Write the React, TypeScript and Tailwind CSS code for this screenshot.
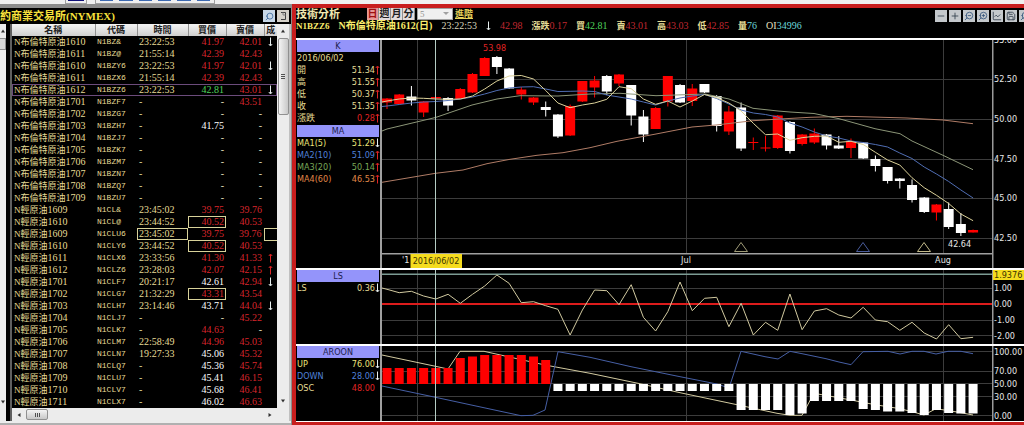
import React from "react";
import { Minus, Plus, ZoomOut, ZoomIn, Search, Save, ChartLine } from "lucide-react";

type Tone = "r" | "g" | "w";
interface IQuote {
  name: string;
  month: string;
  code: string;
  time: string;
  bid: string;
  ask: string;
  bidTone?: Tone;
  dir?: "up" | "down";
  boxBid?: boolean;
  boxTime?: boolean;
  selected?: boolean;
}

const BRENT = "N布倫特原油";
const CRUDE = "N輕原油";

const quotes: IQuote[] = [
  { name: BRENT, month: "1610", code: "N1BZ&", time: "23:22:53", bid: "41.97", ask: "42.01", dir: "down" },
  { name: BRENT, month: "1611", code: "N1BZ@", time: "21:55:14", bid: "42.39", ask: "42.43" },
  { name: BRENT, month: "1610", code: "N1BZY6", time: "23:22:53", bid: "41.97", ask: "42.01", dir: "down" },
  { name: BRENT, month: "1611", code: "N1BZX6", time: "21:55:14", bid: "42.39", ask: "42.43" },
  { name: BRENT, month: "1612", code: "N1BZZ6", time: "23:22:53", bid: "42.81", ask: "43.01", bidTone: "g", dir: "down", selected: true },
  { name: BRENT, month: "1701", code: "N1BZF7", time: "-", bid: "-", ask: "43.51" },
  { name: BRENT, month: "1702", code: "N1BZG7", time: "-", bid: "-", ask: "-" },
  { name: BRENT, month: "1703", code: "N1BZH7", time: "-", bid: "41.75", ask: "-", bidTone: "w" },
  { name: BRENT, month: "1704", code: "N1BZJ7", time: "-", bid: "-", ask: "-" },
  { name: BRENT, month: "1705", code: "N1BZK7", time: "-", bid: "-", ask: "-" },
  { name: BRENT, month: "1706", code: "N1BZM7", time: "-", bid: "-", ask: "-" },
  { name: BRENT, month: "1707", code: "N1BZN7", time: "-", bid: "-", ask: "-" },
  { name: BRENT, month: "1708", code: "N1BZQ7", time: "-", bid: "-", ask: "-" },
  { name: BRENT, month: "1709", code: "N1BZU7", time: "-", bid: "-", ask: "-" },
  { name: CRUDE, month: "1609", code: "N1CL&", time: "23:45:02", bid: "39.75", ask: "39.76" },
  { name: CRUDE, month: "1610", code: "N1CL@", time: "23:44:52", bid: "40.52", ask: "40.53", boxBid: true },
  { name: CRUDE, month: "1609", code: "N1CLU6", time: "23:45:02", bid: "39.75", ask: "39.76", boxTime: true },
  { name: CRUDE, month: "1610", code: "N1CLY6", time: "23:44:52", bid: "40.52", ask: "40.53", boxBid: true },
  { name: CRUDE, month: "1611", code: "N1CLX6", time: "23:33:56", bid: "41.30", ask: "41.33", dir: "up" },
  { name: CRUDE, month: "1612", code: "N1CLZ6", time: "23:28:03", bid: "42.07", ask: "42.15", dir: "up" },
  { name: CRUDE, month: "1701", code: "N1CLF7", time: "20:21:17", bid: "42.61", ask: "42.94", bidTone: "w", dir: "down" },
  { name: CRUDE, month: "1702", code: "N1CLG7", time: "21:32:29", bid: "43.31", ask: "43.54", boxBid: true },
  { name: CRUDE, month: "1703", code: "N1CLH7", time: "23:14:46", bid: "43.71", ask: "44.04", bidTone: "w", dir: "down" },
  { name: CRUDE, month: "1704", code: "N1CLJ7", time: "-", bid: "-", ask: "45.22" },
  { name: CRUDE, month: "1705", code: "N1CLK7", time: "-", bid: "44.63", ask: "-" },
  { name: CRUDE, month: "1706", code: "N1CLM7", time: "22:58:49", bid: "44.96", ask: "45.03" },
  { name: CRUDE, month: "1707", code: "N1CLN7", time: "19:27:33", bid: "45.06", ask: "45.32", bidTone: "w" },
  { name: CRUDE, month: "1708", code: "N1CLQ7", time: "-", bid: "45.36", ask: "45.74", bidTone: "w" },
  { name: CRUDE, month: "1709", code: "N1CLU7", time: "-", bid: "45.41", ask: "46.15", bidTone: "w" },
  { name: CRUDE, month: "1710", code: "N1CLV7", time: "-", bid: "45.68", ask: "46.41", bidTone: "w" },
  { name: CRUDE, month: "1711", code: "N1CLX7", time: "-", bid: "46.02", ask: "46.63", bidTone: "w" },
];

const toneClass: Record<Tone, string> = {
  r: "text-[#d8262c]",
  g: "text-[#4fd35c]",
  w: "text-white",
};

// x of the n-th trading day
const dayX = (i: number) => 387 + i * 12.21;

// up day?, body top, body bottom, high, low
const candles: [number, number, number, number, number][] = [
  [1, 98.5, 102.5, 98, 109], [1, 94.5, 104, 94, 104], [0, 96.5, 100.5, 86, 105.5], [1, 101.5, 112.5, 101, 117],
  [1, 97, 98.5, 97, 99], [0, 98, 105.5, 97, 111], [1, 89, 99, 88, 99], [1, 74, 92.5, 73, 93],
  [1, 58, 76, 57, 76], [0, 57, 67, 56, 74], [0, 68.5, 88.5, 68, 89], [1, 89.5, 94.5, 87, 99.5],
  [1, 97.5, 102.5, 97, 105], [0, 107, 110, 101.5, 116.5], [0, 114.5, 136.5, 114, 138], [1, 106, 135.5, 104.5, 136],
  [1, 81, 101.5, 81, 102], [1, 80.5, 87.5, 76, 97.5], [0, 76, 91.5, 75, 95], [1, 74.5, 83.5, 74, 86],
  [0, 85, 115.5, 85, 125.5], [0, 116.5, 134.5, 110, 142], [1, 108, 129, 107, 129], [1, 76, 101.5, 76, 106.5],
  [0, 85, 102.5, 84, 103], [1, 88.5, 101, 84, 106], [0, 84, 92.5, 84, 93], [0, 96, 126, 95, 131.5],
  [1, 111.5, 131.5, 106, 135], [0, 107.5, 148.5, 102.5, 151], [1, 142, 143, 137.5, 150], [1, 147.5, 148.5, 136, 151.5],
  [1, 115.5, 148, 115, 149], [0, 122, 151, 121, 153.5], [1, 134.5, 144, 134, 145.5], [1, 133.5, 142.5, 128.5, 144],
  [0, 134.5, 145.5, 134, 149.5], [0, 145.5, 148.5, 136, 149], [1, 141, 148, 138.5, 158], [0, 142.5, 158.5, 142, 159],
  [0, 159, 166, 155.5, 171.5], [0, 167, 181, 167, 183.5], [0, 178.5, 181, 178, 188.5], [0, 185, 200, 179.5, 202.5],
  [0, 197.5, 212, 197, 213], [1, 204.5, 212.5, 204, 220.5], [0, 209, 227, 202.5, 229], [0, 224, 233, 213, 236],
  [1, 230, 232.5, 229.5, 232.5],
];

const ma5 = [
  101, 99, 98, 98.3, 99, 99.3, 99, 96, 89, 81, 76, 75.5, 79, 90.5, 103, 107.7, 105, 103, 99.3, 86.7, 88.7, 99, 104.3, 101, 107,
  101, 94.5, 97.7, 103, 111, 123.3, 134.7, 134, 140.3, 137.7, 136.3, 136, 142.3, 141.3, 144.5, 152.3, 160, 165, 177.7, 187.7,
  195.3, 203.5, 214, 220.7,
];
const ma10 = [
  106, 104.5, 103, 102, 101.5, 100.5, 99, 97, 94, 90.5, 88, 87, 86.7, 89, 91.5, 91.3, 91, 91.5, 95, 97, 99, 102, 105, 101, 98,
  96, 94.5, 98.5, 104, 110, 113, 114.5, 117, 123, 127, 132, 136, 138, 141, 142.5, 144.5, 147, 153, 158.5, 167, 174, 181.5, 190,
  198,
];
const ls = [
  289.3, 292.7, 291.3, 296, 299, 294.3, 303.3, 294.3, 286, 275, 283.3, 302.7, 301.7, 305.7, 309.3, 335, 310, 290, 290.7, 304.7,
  284.7, 317.3, 331, 311.7, 282, 310.7, 298.3, 297.3, 326.7, 303.3, 335, 322.3, 330.3, 294, 329.7, 311, 308.7, 315, 318, 307.3,
  320, 321.7, 330.3, 322.3, 333, 339, 324.7, 338.7, 337.3,
];
// far end of every oscillator bar, the base line is at 384
const osc = [
  368, 368, 368, 368, 368, 368, 358, 356.5, 355, 355, 355, 355, 356.5, 360, 391, 391, 391, 391, 391, 391, 391, 391, 391, 391,
  391, 391, 391, 391, 391, 410, 410, 410, 410, 415, 413.5, 401, 401, 401, 401, 409, 410, 411.5, 411.5, 413, 415, 410, 413,
  413.5, 413.5,
];

const toPoints = (list: number[], start: number) =>
  `382,${start} ` + list.map((y, i) => `${dayX(i).toFixed(1)},${y}`).join(" ");

const ma20 =
  "382,131 387,129 435.5,117.5 472,105 497,99 520,95.7 558,96 590,94 620,93.3 656,95.7 705,94 729,99 753,108.3 778,111 790,112 814,113.5 839,118.7 875,128.7 900,133.7 912,141 943,155.3 973,169.7";
const ma60 =
  "382,182.3 435.5,173.3 463,170 487,163.7 510,159.3 537,155.3 563,152.7 590,147.7 617,141.3 656,134 692,127 716,125 753,120.7 780,119 810,117.3 847,116.3 907,118 943,120 973,123.7";
const aroonUp =
  "382,355 435.5,366.3 448,369 460,351.3 484,351.3 545,365 590,373.3 638,383.3 680,392.7 729,403 777,413.3 790,415.3 802,415.3 814,393.3 833,396.7 851,400 875,404.7 900,408.7 912,411.7 924,415 936,408.7 957,412 973,415";
const aroonDown =
  "382,386 435.5,397.3 521,415.7 533,415.3 545,410 558,351.7 590,357.3 631,366.7 680,376.7 717,384 726,387 730,385 741,351.3 765,356.7 778,359 790,351.3 802,353.7 826,358.7 839,362 851,364.7 863,351.7 888,351.3 900,354 912,351.3 924,351.3 936,354 948,351.3 961,351.3 973,353.7";

const GRID = "#3c3c3c";
const labelProps = { fill: "#e6e6e6", fontSize: 9, fontFamily: "'DejaVu Sans Condensed','DejaVu Sans',sans-serif" };

const Grid = ({ rows, top, bottom }: { rows: number[]; top: number; bottom: number }) => (
  <g stroke={GRID} shapeRendering="crispEdges">
    {rows.map((y) => (
      <line key={y} x1="382" x2="992" y1={y} y2={y} />
    ))}
    {[417.5, 686.5, 943.5].map((x) => (
      <line key={x} x1={x} x2={x} y1={top} y2={bottom} />
    ))}
  </g>
);

const AxisLine = ({ top, bottom }: { top: number; bottom: number }) => (
  <rect x="992" y={top} width="1.5" height={bottom - top} fill="#9a9a9a" />
);

const Cursor = ({ top, bottom }: { top: number; bottom: number }) => (
  <rect x="435" y={top} width="1" height={bottom - top} fill="#b4ccc4" />
);

const PriceChart = () => (
  <svg viewBox="382 40 642 228" className="block h-auto w-full" role="img" aria-label="K">
    <Grid rows={[79.5, 119.5, 159.5, 198.5, 238.5]} top={40} bottom={253} />
    {candles.map(([up, top, bottom, high, low], i) => (
      <g key={i} fill={up ? "#ff0000" : "#ffffff"}>
        <rect x={dayX(i) - 0.5} y={high} width="1" height={low - high} />
        <rect x={dayX(i) - 5} y={top} width="10" height={bottom - top} />
      </g>
    ))}
    <g fill="none" strokeWidth="1">
      <polyline points={ma60} stroke="#b07c66" />
      <polyline points={ma20} stroke="#8c9678" />
      <polyline points={toPoints(ma10, 106.5)} stroke="#506eb4" />
      <polyline points={toPoints(ma5, 102)} stroke="#dcd29a" />
      <path d="M734.5 251.5h13l-6.5-9z" stroke="#a09c78" />
      <path d="M856.5 251.5h13l-6.5-9z" stroke="#4a5c9c" />
      <path d="M917.5 251.5h13l-6.5-9z" stroke="#c4bc8c" />
    </g>
    <text {...labelProps} x="483" y="51" fill="#e02424">53.98</text>
    <text {...labelProps} x="948" y="247">42.64</text>
    <rect x="382" y="253" width="611" height="1.5" fill="#a0a0a0" />
    <Cursor top={40} bottom={254} />
    <text {...labelProps} x="402" y="263">'1</text>
    <rect x="410.5" y="254" width="51.5" height="14" fill="#f5dc1e" />
    <text {...labelProps} x="436" y="264" textAnchor="middle" fill="#3c3400">2016/06/02</text>
    <text {...labelProps} x="686" y="263" textAnchor="middle">Jul</text>
    <text {...labelProps} x="943" y="263" textAnchor="middle">Aug</text>
    <AxisLine top={40} bottom={268} />
    <text {...labelProps} x="994" y="43">55.00</text>
    <text {...labelProps} x="994" y="82">52.50</text>
    <text {...labelProps} x="994" y="122">50.00</text>
    <text {...labelProps} x="994" y="162">47.50</text>
    <text {...labelProps} x="994" y="201">45.00</text>
    <text {...labelProps} x="994" y="241">42.50</text>
  </svg>
);

const LsChart = () => (
  <svg viewBox="382 270 642 74" className="block h-auto w-full" role="img" aria-label="LS">
    <Grid rows={[288.5, 320.5, 335.5]} top={270} bottom={344} />
    <rect x="382" y="273.5" width="611" height="1.5" fill="#7c9c94" />
    <rect x="382" y="303" width="611" height="2" fill="#dc1c1c" />
    <polyline points={toPoints(ls, 288)} fill="none" stroke="#d2caa0" />
    <Cursor top={270} bottom={344} />
    <AxisLine top={270} bottom={344} />
    <rect x="993" y="270" width="31" height="10" fill="#f5dc1e" />
    <text {...labelProps} x="994" y="278" fill="#3c3400">1.9376</text>
    <text {...labelProps} x="994" y="291">1.00</text>
    <text {...labelProps} x="994" y="307">0.00</text>
    <text {...labelProps} x="994" y="323">-1.00</text>
    <text {...labelProps} x="994" y="339">-2.00</text>
  </svg>
);

const AroonChart = () => (
  <svg viewBox="382 346 642 75" className="block h-auto w-full" role="img" aria-label="AROON">
    <Grid rows={[351.5, 371.5, 383.5, 396.5, 415.5]} top={346} bottom={421} />
    <polyline points={aroonUp} fill="none" stroke="#d2caa0" />
    <polyline points={aroonDown} fill="none" stroke="#465fa5" />
    {osc.map((y, i) => (
      <rect
        key={i}
        x={dayX(i) - 4.5}
        y={Math.min(y, 384)}
        width="9"
        height={Math.abs(y - 384)}
        fill={y < 384 ? "#ff0000" : "#ffffff"}
      />
    ))}
    <Cursor top={346} bottom={421} />
    <AxisLine top={346} bottom={421} />
    <text {...labelProps} x="994" y="355">100.00</text>
    <text {...labelProps} x="994" y="374">70.00</text>
    <text {...labelProps} x="994" y="387">50.00</text>
    <text {...labelProps} x="994" y="400">30.00</text>
    <text {...labelProps} x="994" y="419">0.00</text>
  </svg>
);

const Arrow = ({ dir }: { dir: "up" | "down" }) => (
  <svg viewBox="0 0 5 10" width="5" height="10" className="shrink-0" fill="none" stroke={dir === "up" ? "#e02424" : "#e8f0f0"}>
    {dir === "up" ? <path d="M2.5 9.5v-8M.8 3l1.7-2 1.7 2" /> : <path d="M2.5 .5v8M.8 7l1.7 2 1.7-2" />}
  </svg>
);

const InfoTitle = ({ children }: { children: string }) => (
  <h3 className="mx-px h-3 bg-[#9494fa] text-center leading-3 text-[#20204c]">{children}</h3>
);

interface IInfoRow {
  label: string;
  value?: string;
  color: string;
  valueColor?: string;
  dir?: "up" | "down";
}

const InfoRow = ({ label, value, color, valueColor = "", dir }: IInfoRow) => (
  <div className={`flex h-3 items-center leading-3 ${color}`}>
    <span className="flex-1 pl-px">{label}</span>
    <span className={valueColor}>{value}</span>
    <span className="flex w-[5px] shrink-0 justify-center">{dir && <Arrow dir={dir} />}</span>
  </div>
);

const CREAM = "text-[#e6dc96]";

const Panel = ({ info, chart }: { info: React.ReactNode; chart: React.ReactNode }) => (
  <section className="flex">
    <div className="w-[86px] shrink-0 border-r-2 border-[#a0a0a0] font-['DejaVu_Sans_Condensed','DejaVu_Sans','Noto_Sans_CJK_TC',sans-serif] text-[9px]">
      {info}
    </div>
    <div className="min-w-0 flex-1">{chart}</div>
  </section>
);

const Field = ({ label, value, color }: { label: string; value: string; color: string }) => (
  <span className="flex items-center">
    <b className="text-[9px] text-[#e6dc96]">{label}</b>
    <span className={color}>{value}</span>
  </span>
);

const Th = ({ children, className }: { children: string; className: string }) => (
  <th className={`h-3 border-r border-[#909090] p-0 text-center font-bold leading-3 ${className}`}>{children}</th>
);

const price = (value: string, tone: Tone) => (value === "-" ? "text-[#e6e0c0]" : toneClass[tone]);

const QuoteTable = () => (
  <table className="w-full table-fixed border-collapse font-['Liberation_Serif','Noto_Sans_CJK_TC',serif] text-[10px]">
    <thead className="bg-gradient-to-b from-[#f4f4f4] to-[#cfcfcf] text-[9px] text-[#202020]">
      <tr>
        <Th className="w-[83px]">名稱</Th>
        <Th className="w-[42px]">代碼</Th>
        <Th className="w-[51px]">時間</Th>
        <Th className="w-[38px]">買價</Th>
        <Th className="w-[38px]">賣價</Th>
        <th className="h-3 whitespace-nowrap p-0 text-center font-bold leading-3">成</th>
      </tr>
    </thead>
    <tbody className="text-[#e6dc96]">
      {quotes.map((q, i) => (
        <tr key={i} className={q.selected ? "outline outline-[#6c4c7c] -outline-offset-1" : ""}>
          <td className="h-3 whitespace-nowrap p-0 pl-0.5 leading-3">
            <span className="flex h-3 items-center">
              <span className="text-[9px]">{q.name}</span>
              {q.month}
            </span>
          </td>
          <td className="p-0 pl-0.5 font-['Liberation_Mono',monospace] text-[8px] leading-3">{q.code}</td>
          <td className={`p-0 pl-0.5 leading-3 ${q.boxTime ? "outline outline-[#d8d29a] -outline-offset-1" : ""}`}>{q.time}</td>
          <td className={`p-0 pr-0.5 text-right leading-3 ${price(q.bid, q.bidTone ?? "r")} ${q.boxBid ? "outline outline-[#d8d29a] -outline-offset-1" : ""}`}>
            {q.bid}
          </td>
          <td className={`p-0 pr-0.5 text-right leading-3 ${price(q.ask, "r")}`}>{q.ask}</td>
          <td className={`p-0 ${q.boxTime ? "border border-r-0 border-[#d8d29a]" : ""}`}>
            <span className="flex justify-center">{q.dir && <Arrow dir={q.dir} />}</span>
          </td>
        </tr>
      ))}
    </tbody>
  </table>
);

const Caret = ({ d }: { d: string }) => (
  <svg viewBox="0 0 6 6" width="6" height="6" fill="#303030">
    <path d={d} />
  </svg>
);
const UP = "M1 4.5h4l-2-3z";
const DOWN = "M1 1.5h4l-2 3z";

const QuotePanel = () => (
  <section className="flex w-[291px] shrink-0 flex-col border-t-4 border-[#8c8c8c] bg-black">
    <header className="flex h-4 items-center bg-black">
      <h1 className="flex-1 whitespace-nowrap font-['Liberation_Serif','Noto_Sans_CJK_TC',serif] text-[11px] font-bold leading-4 text-[#f8e23c]">
        約商業交易所(NYMEX)
      </h1>
      <button aria-label="search" className="flex h-3 w-3 items-center justify-center bg-[#c8d8e8]">
        <Search size={9} className="-scale-x-100 text-[#2c5c94]" />
      </button>
      <button aria-label="page" className="ml-0.5 mr-0.5 flex h-3 w-3 items-center justify-center bg-[#d4d0c8]">
        <svg viewBox="0 0 12 12" width="12" height="12" fill="none" stroke="#404040">
          <path d="M4 2.5h4.5v7H4" />
          <path d="M6 2.5v2.5h2.5" stroke="#808080" />
        </svg>
      </button>
    </header>
    <div className="flex">
      <div className="flex w-1.5 shrink-0 flex-col justify-between bg-[#ececec] pb-4 pt-1">
        <div>
          <Caret d={UP} />
          <div className="mt-1 h-3 border border-l-0 border-[#909090] bg-[#d8d8d8]" />
        </div>
        <Caret d={DOWN} />
      </div>
      <div className="ml-1 min-w-0 flex-1 border-l-2 border-[#606060]">
        <div className="flex">
          <div className="min-w-0 flex-1">
            <QuoteTable />
          </div>
          <div className="flex w-3 shrink-0 flex-col items-center justify-between bg-[#ececec] pb-1 pt-1">
            <div className="flex w-full flex-col items-center">
              <Caret d={UP} />
              <div className="mt-1 flex h-[77px] w-[11px] flex-col items-center justify-center gap-px rounded-xs border border-[#909090] bg-gradient-to-r from-[#f4f4f4] to-[#c8c8c8]">
                <i className="h-px w-1 bg-[#505050]" />
                <i className="h-px w-1 bg-[#505050]" />
                <i className="h-px w-1 bg-[#505050]" />
              </div>
            </div>
            <Caret d={DOWN} />
          </div>
        </div>
        <div className="flex h-[13px] items-center bg-[#ececec] pl-1 pr-4">
          <Caret d="M4.5 1v4l-3-2z" />
          <div className="ml-1 flex h-[11px] w-[22px] items-center justify-center gap-px rounded-xs border border-[#909090] bg-gradient-to-b from-[#f4f4f4] to-[#c8c8c8]">
            <i className="h-1 w-px bg-[#505050]" />
            <i className="h-1 w-px bg-[#505050]" />
            <i className="h-1 w-px bg-[#505050]" />
          </div>
          <span className="flex-1" />
          <Caret d="M1.5 1v4l3-2z" />
        </div>
      </div>
      <div className="w-0.5 shrink-0 bg-[#c0c0c0]" />
    </div>
    <div className="h-1 border-b-2 border-[#b0b0b0] bg-[#ececec]" />
    <div className="flex-1 bg-[#8c8c8c]" />
  </section>
);

const tools = [
  { label: "縮小", icon: Minus },
  { label: "放大", icon: Plus },
  { label: "zoom out", icon: ZoomOut, flip: true },
  { label: "zoom in", icon: ZoomIn, flip: true },
  { label: "chart", icon: ChartLine },
  { label: "save", icon: Save },
  { label: "search", icon: Search, flip: true },
];

const ChartHeader = () => (
  <header className="h-[30px] font-['Liberation_Serif','Noto_Sans_CJK_TC',serif] text-[10px] leading-3">
    <div className="flex h-3 items-center">
      <h2 className="w-[71px] text-[11px] font-bold text-[#f0e8b0]">技術分析</h2>
      {["日", "週", "月", "分"].map((t, i) => (
        <button
          key={t}
          className={`h-3 w-3 border-r border-[#909090] text-[10px] font-bold leading-3 ${i === 0 ? "bg-[#e89898] text-[#a01010]" : "bg-[#e4dcdc] text-[#202020]"}`}
        >
          {t}
        </button>
      ))}
      <div className="relative ml-0.5">
        <select
          aria-label="分鐘"
          className="block h-3 w-9 appearance-none border border-[#a0a0a0] bg-[#f0f0f0] pl-0.5 text-[9px] leading-[10px] text-[#909090]"
        >
          <option>5</option>
        </select>
        <span className="pointer-events-none absolute right-1 top-1">
          <svg viewBox="0 0 6 4" width="6" height="4" fill="#a0a0a0"><path d="M0 0h6L3 3z" /></svg>
        </span>
      </div>
      <a href="#advanced" className="ml-0.5 text-[9px] font-bold text-[#e6d25a] underline">進階</a>
      <div className="ml-auto flex w-[89px] gap-0.5 overflow-hidden pt-1">
        {tools.map(({ label, icon: Icon, flip }) => (
          <button key={label} aria-label={label} className="flex h-3 w-3 shrink-0 items-center justify-center bg-[#c4c8cc]">
            <Icon size={10} className={flip ? "-scale-x-100 text-[#34547c]" : "text-[#303c4c]"} />
          </button>
        ))}
      </div>
    </div>
    <div className="flex h-3 items-center gap-[9px] whitespace-nowrap">
      <b className="text-[9px] text-[#f8ec6c]">N1BZZ6</b>
      <b className="text-[#f8ec6c]">N布倫特原油1612(日)</b>
      <span className="text-[#d8d4bc]">23:22:53</span>
      <Arrow dir="down" />
      <span className="text-[#c02830]">42.98</span>
      <Field label="漲跌" value="0.17" color="text-[#c02830]" />
      <Field label="買" value="42.81" color="text-[#4fd35c]" />
      <Field label="賣" value="43.01" color="text-[#c02830]" />
      <Field label="高" value="43.03" color="text-[#c02830]" />
      <Field label="低" value="42.85" color="text-[#c02830]" />
      <Field label="量" value="76" color="text-[#6cd8dc]" />
      <span className="text-[#6cd8dc]"><span className="text-[#e6e0c0]">OI</span>34996</span>
    </div>
  </header>
);

const ChartPanel = () => (
  <main className="ml-px min-w-0 flex-1 border-y-4 border-b-[3px] border-l-4 border-[#c81e1e] bg-black">
    <ChartHeader />
    <div className="flex flex-col divide-y-2 divide-white border-b border-t-2 border-white">
      <Panel
        info={
          <>
            <InfoTitle>K</InfoTitle>
            <InfoRow label="2016/06/02" color={CREAM} />
            <InfoRow label="開" value="51.34" color={CREAM} dir="up" />
            <InfoRow label="高" value="51.55" color={CREAM} dir="up" />
            <InfoRow label="低" value="50.37" color={CREAM} dir="up" />
            <InfoRow label="收" value="51.35" color={CREAM} dir="up" />
            <InfoRow label="漲跌" value="0.28" color={CREAM} valueColor="text-[#e02424]" dir="up" />
            <div className="mt-px">
              <InfoTitle>MA</InfoTitle>
              <InfoRow label="MA1(5)" value="51.29" color="text-[#ece478]" dir="down" />
              <InfoRow label="MA2(10)" value="51.09" color="text-[#5080d8]" dir="up" />
              <InfoRow label="MA3(20)" value="50.14" color="text-[#78a858]" dir="up" />
              <InfoRow label="MA4(60)" value="46.53" color="text-[#e08848]" dir="up" />
            </div>
          </>
        }
        chart={<PriceChart />}
      />
      <Panel
        info={
          <>
            <InfoTitle>LS</InfoTitle>
            <InfoRow label="LS" value="0.36" color={CREAM} dir="down" />
          </>
        }
        chart={<LsChart />}
      />
      <Panel
        info={
          <>
            <InfoTitle>AROON</InfoTitle>
            <InfoRow label="UP" value="76.00" color="text-[#ece478]" dir="down" />
            <InfoRow label="DOWN" value="28.00" color="text-[#5080d8]" dir="down" />
            <InfoRow label="OSC" value="48.00" color={CREAM} valueColor="text-[#e02424]" />
          </>
        }
        chart={<AroonChart />}
      />
    </div>
  </main>
);

const App = () => (
  <div className="flex min-h-screen flex-col bg-[#8c8c8c]">
    <div className="flex h-1 items-start gap-1 bg-[#f0f0f0]">
      <div className="ml-[65px] flex h-1 w-[22px] justify-center border-x border-b border-[#a0a0a0]">
        <i className="h-px w-4 bg-[#101078]" />
      </div>
      <div className="ml-1 flex h-1 w-[120px] items-start gap-1.5 border-x border-b border-[#a0a0a0] px-1">
        {[0, 1, 2, 3, 4, 5].map((n) => (
          <i key={n} className="h-px flex-1 bg-[#3c68b0]" />
        ))}
      </div>
    </div>
    <div className="flex flex-1">
      <QuotePanel />
      <ChartPanel />
    </div>
  </div>
);

export default App;
